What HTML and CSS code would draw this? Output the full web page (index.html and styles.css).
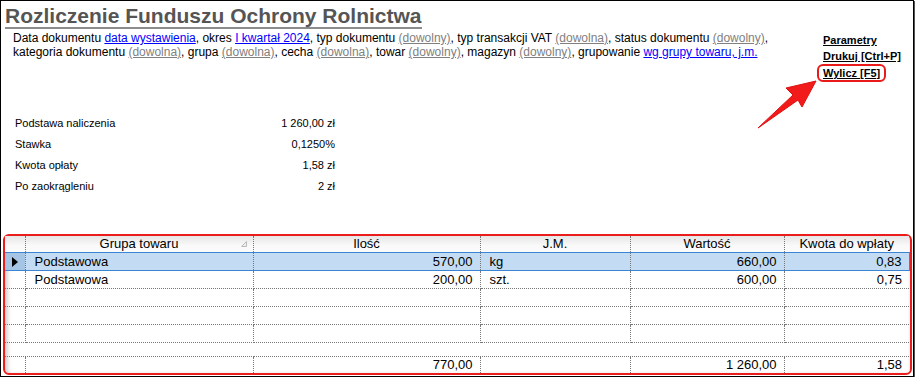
FILE: index.html
```html
<!DOCTYPE html>
<html lang="pl">
<head>
    <meta charset="UTF-8">
    <title>Rozliczenie Funduszu Ochrony Rolnictwa</title>
    <link rel="stylesheet" href="styles.css">
</head>
<body>
    <div class="window">
        <div class="top">
            <div class="head">
                <h1 class="title">Rozliczenie Funduszu Ochrony Rolnictwa</h1>
                <p class="filters">
                    Data dokumentu <a href="#" class="link">data wystawienia</a>, okres <a href="#" class="link">I kwartał 2024</a>, typ dokumentu <a href="#" class="any">(dowolny)</a>, typ transakcji VAT <a href="#" class="any">(dowolna)</a>, status dokumentu <a href="#" class="any">(dowolny)</a>,<br>
                    kategoria dokumentu <a href="#" class="any">(dowolna)</a>, grupa <a href="#" class="any">(dowolna)</a>, cecha <a href="#" class="any">(dowolna)</a>, towar <a href="#" class="any">(dowolny)</a>, magazyn <a href="#" class="any">(dowolny)</a>, grupowanie <a href="#" class="link">wg grupy towaru, j.m.</a>
                </p>
            </div>
            <div class="actions">
                <a href="#">Parametry</a>
                <a href="#">Drukuj [Ctrl+P]</a>
                <a href="#" class="hl">Wylicz [F5]</a>
            </div>
        </div>

        <dl class="summary">
            <dt>Podstawa naliczenia</dt><dd>1&nbsp;260,00 zł</dd>
            <dt>Stawka</dt><dd>0,1250%</dd>
            <dt>Kwota opłaty</dt><dd>1,58 zł</dd>
            <dt>Po zaokrągleniu</dt><dd>2 zł</dd>
        </dl>

        <div class="grid-box">
            <table class="grid">
                <colgroup>
                    <col style="width: 20px">
                    <col style="width: 228px">
                    <col style="width: 227px">
                    <col style="width: 150px">
                    <col style="width: 154px">
                    <col style="width: 125px">
                </colgroup>
                <thead>
                    <tr>
                        <th class="ind"></th>
                        <th class="sorted">Grupa towaru<svg class="sort" width="6" height="6" viewBox="0 0 6 6"><polygon points="0.5,5.5 5.5,0.5 5.5,5.5" fill="#eee" stroke="#bbb" stroke-width="1"/></svg></th>
                        <th>Ilość</th>
                        <th>J.M.</th>
                        <th>Wartość</th>
                        <th>Kwota do wpłaty</th>
                    </tr>
                </thead>
                <tbody>
                    <tr class="sel">
                        <td class="ind"><span class="mark"></span></td>
                        <td>Podstawowa</td>
                        <td class="num">570,00</td>
                        <td>kg</td>
                        <td class="num">660,00</td>
                        <td class="num">0,83</td>
                    </tr>
                    <tr>
                        <td class="ind"></td>
                        <td>Podstawowa</td>
                        <td class="num">200,00</td>
                        <td>szt.</td>
                        <td class="num">600,00</td>
                        <td class="num">0,75</td>
                    </tr>
                    <tr><td class="ind"></td><td></td><td></td><td></td><td></td><td></td></tr>
                    <tr><td class="ind"></td><td></td><td></td><td></td><td></td><td></td></tr>
                    <tr><td class="ind"></td><td></td><td></td><td></td><td></td><td></td></tr>
                    <tr class="gap"><td colspan="6"></td></tr>
                    <tr class="total">
                        <td class="ind"></td>
                        <td></td>
                        <td class="num">770,00</td>
                        <td></td>
                        <td class="num">1&nbsp;260,00</td>
                        <td class="num">1,58</td>
                    </tr>
                </tbody>
            </table>
        </div>

        <svg class="arrow" width="64" height="54" viewBox="0 0 64 54">
            <polygon points="3,50 38,17 31,10 61,3 47,29 43,22" fill="#f21b1b" stroke="#e01010" stroke-width="1" stroke-linejoin="round"/>
        </svg>
    </div>
</body>
</html>
```

FILE: styles.css
```css
body {
    margin: 0;
    background: #fff;
    font-family: "Liberation Sans", Arial, sans-serif;
    color: #000;
}

.window {
    position: relative;
    width: 912px;
    height: 375px;
    border: 1px solid #000;
    box-shadow: 1px 1px 0 #555;
    overflow: hidden;
}

.top {
    display: flex;
    align-items: flex-start;
}

.head {
    flex: 1;
    padding-left: 4px;
}

.title {
    display: inline-block;
    margin: 3px 0 0;
    font-size: 21px;
    line-height: 23px;
    font-weight: bold;
    color: #555;
    border-bottom: 2px solid #8c8c8c;
}

.filters {
    margin: 2px 0 0 8px;
    font-size: 12px;
    line-height: 14px;
}

.filters .link {
    color: #0000ff;
}

.filters .any {
    color: #808080;
}

.actions {
    width: 90px;
    padding-top: 31px;
    display: flex;
    flex-direction: column;
    align-items: flex-start;
}

.actions a {
    font-size: 11px;
    font-weight: bold;
    line-height: 16px;
    color: #000;
}

.actions .hl {
    line-height: 14px;
    border: 2px solid #ea1a1a;
    border-radius: 6px;
    padding: 0 4px;
    margin-left: -6px;
}

.summary {
    margin: 31px 0 0 14px;
    width: 320px;
    display: grid;
    grid-template-columns: 1fr auto;
    font-size: 11px;
    line-height: 21px;
}

.summary dt,
.summary dd {
    margin: 0;
}

.summary dd {
    text-align: right;
}

.grid-box {
    margin: 37px 0 0 2px;
    width: 905px;
    border: 2px solid #ea1c1c;
    border-radius: 6px;
    box-shadow: inset 2px 2px 5px rgba(0, 0, 0, 0.25);
}

.grid {
    width: 904px;
    table-layout: fixed;
    border-collapse: collapse;
    font-size: 13px;
    line-height: 16px;
}

.grid th {
    height: 16px;
    padding: 0;
    font-weight: normal;
    text-align: center;
    background: linear-gradient(#e6e6e6, #f9f9f9 60%, #fbfbfb);
    border-right: 1px dotted #777;
}

.grid th.sorted {
    padding-left: 12px;
}

.grid .sort {
    float: right;
    margin: 5px 6px 0 0;
}

.grid td {
    height: 17px;
    padding: 0 7px 0 9px;
    border-right: 1px dotted #777;
    border-bottom: 1px dotted #777;
    white-space: nowrap;
}

.grid th:last-child,
.grid td:last-child {
    border-right: none;
}

.grid td.num {
    text-align: right;
}

.grid td.ind {
    padding: 0 0 0 7px;
}

.grid tr.sel td {
    background: #c3dcf3;
    border-top: 1px solid #3a86d5;
    border-bottom: 1px solid #3a86d5;
}

.grid tr.sel td:last-child {
    border-right: 1px solid #3a86d5;
}

.grid tr.sel td.ind {
    background: #a6c4e3;
}

.mark {
    display: inline-block;
    vertical-align: middle;
    border-left: 6px solid #000;
    border-top: 5px solid transparent;
    border-bottom: 5px solid transparent;
}

.grid tr.gap td {
    height: 13px;
    border-right: none;
}

.grid tr.total td {
    height: 16px;
    border-bottom: none;
}

.arrow {
    position: absolute;
    left: 754px;
    top: 77px;
}
```
